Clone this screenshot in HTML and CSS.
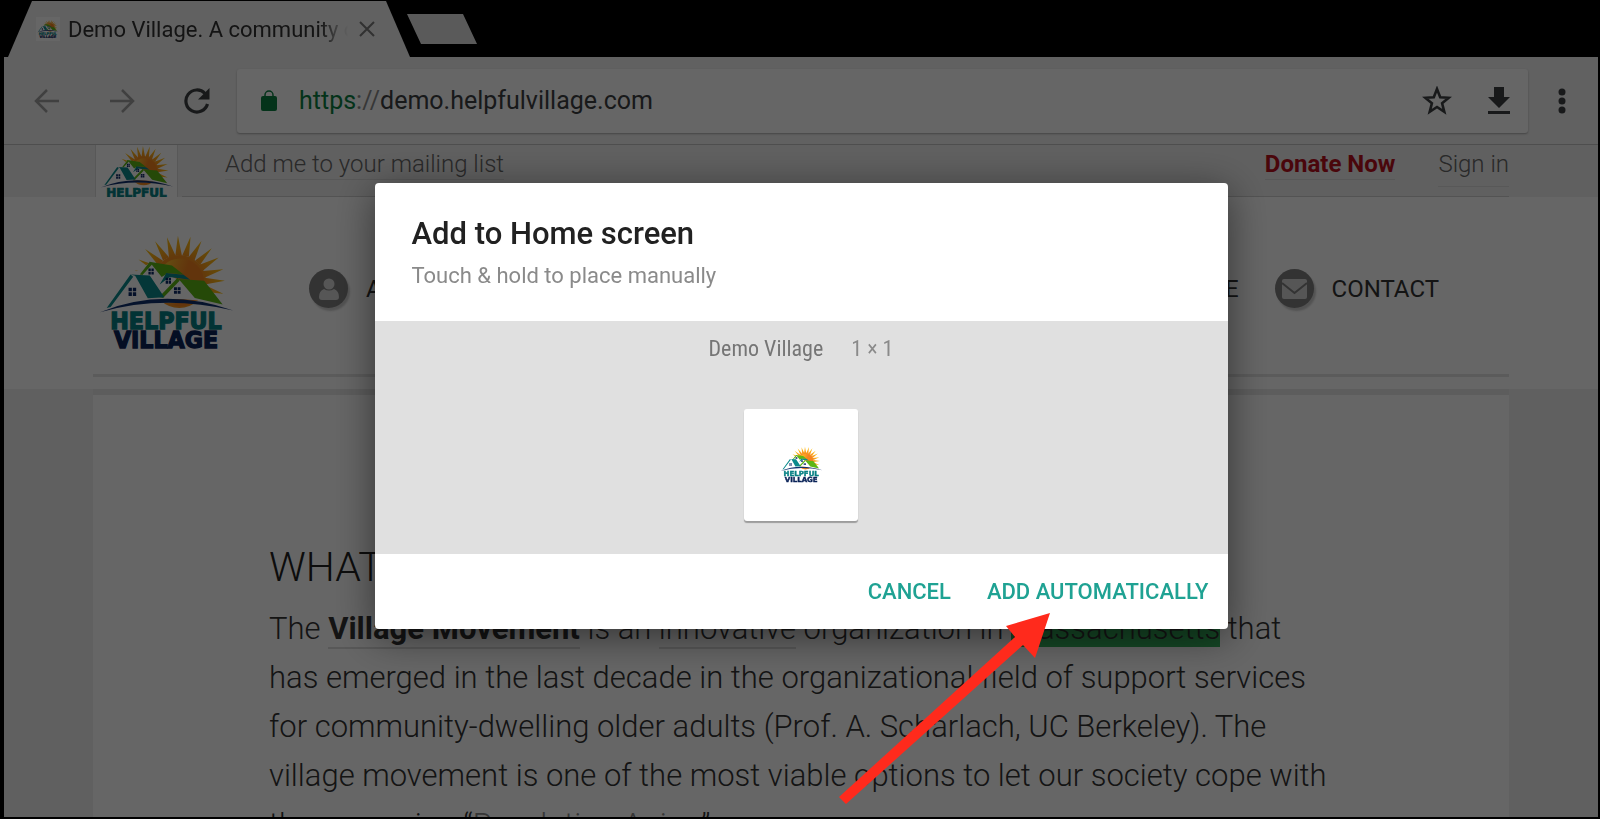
FILE: index.html
```html
<!DOCTYPE html>
<html lang="en">
<head>
    <meta charset="UTF-8">
    <meta name="viewport" content="width=device-width, initial-scale=1.0">
    <title>Demo Village. A community of neighbors</title>
    <link rel="stylesheet" href="styles.css">
</head>
<body>

<!-- Shared logo -->
<svg class="sprite" aria-hidden="true">
    <defs>
        <radialGradient id="sunFill" gradientUnits="userSpaceOnUse" cx="297" cy="423" r="138">
            <stop offset="0" stop-color="#f58220"/>
            <stop offset="0.55" stop-color="#f7901e"/>
            <stop offset="0.75" stop-color="#fbab18"/>
            <stop offset="1" stop-color="#ffc20e"/>
        </radialGradient>
        <linearGradient id="sunCore" x1="0" y1="0.2" x2="1" y2="0.5">
            <stop offset="0.1" stop-color="#ffc62e"/>
            <stop offset="0.6" stop-color="#f5821f"/>
        </linearGradient>
    </defs>
    <symbol id="logo" viewBox="55 280 410 350">
        <path fill="url(#sunFill)" d="M435 421L374 412V432zM430 460L369 454 374 434zM430 386L373 412 368 392zM416 351L368 391 358 373zM395 323L359 374 345 360zM364 301L343 360 325 350zM331 288L326 349 306 345zM293 285L305 346H285zM260 290L286 346 266 352zM224 302L266 350 248 360zM194 325L248 361 234 375zM174 357L234 377 224 395zM162 390L226 395 222 413z"/>
        <circle cx="297" cy="423" r="80" fill="url(#sunFill)"/>
        <circle cx="300" cy="426" r="72" fill="url(#sunCore)"/>
        <path fill="#fff" d="M80 500L150 404 210 366 260 402 300 420 426 492Q250 456 80 500z"/>
        <path fill="#fff" d="M80 500Q250 464 426 492L430 500Q250 470 70 508z"/>
        <path fill="#5cb615" d="M207 364l68 11 35 27-46-4-20 12zM295 416l77 5 56 72-84-20zM178 402l30-38 10 4-32 36zM236 470l56-58 6 9-50 52z"/>
        <path fill="#0b8a8c" d="M150 402l58 3 44 66-50 3-38-68zM258 398l52 5 20 15-62-8-30 22zM78 503l72-101 8 7-68 91z"/>
        <path fill="#0c2a66" d="M144 442h10v11h-10zM157 442h10v11h-10zM144 456h10v11h-10zM157 456h10v11h-10zM204 384h7v8h-7zM213 384h7v8h-7zM204 394h7v8h-7zM213 394h7v8h-7zM256 412h7v8h-7zM265 412h7v8h-7zM256 422h7v8h-7zM265 422h7v8h-7zM281 441h9v8h-9zM292 441h9v8h-9zM281 451h9v9h-9zM292 451h9v9h-9z"/>
        <path fill="#10306f" d="M58 516Q250 438 460 511 250 462 58 516z"/>
        <text class="logo-top" x="257" y="567">HELPFUL</text>
        <text class="logo-bottom" x="257" y="624">VILLAGE</text>
    </symbol>
</svg>

<div class="browser">
    <!-- Tab Strip -->
    <div class="tab-strip">
        <div class="tab">
            <svg class="favicon"><use href="#logo"/></svg>
            <span class="tab-title">Demo Village. A community of neighbors</span>
            <button class="icon-button tab-close" type="button" aria-label="Close tab">
                <svg width="18" height="18" viewBox="0 0 18 18"><path d="M2 2l14 14M16 2L2 16" fill="none" stroke="#7a7a7a" stroke-width="2"/></svg>
            </button>
        </div>
        <button class="new-tab" type="button" aria-label="New tab"></button>
    </div>

    <!-- Toolbar -->
    <div class="toolbar">
        <div class="toolbar-nav">
            <button class="icon-button" type="button" aria-label="Back">
                <svg width="26" height="26" viewBox="0 0 26 26"><path d="M25 13H2M13 2L2 13l11 11" fill="none" stroke="#a0a0a0" stroke-width="2.500"/></svg>
            </button>
            <button class="icon-button" type="button" aria-label="Forward">
                <svg width="26" height="26" viewBox="0 0 26 26"><path d="M1 13h23M13 2l11 11-11 11" fill="none" stroke="#a0a0a0" stroke-width="2.500"/></svg>
            </button>
            <button class="icon-button" type="button" aria-label="Reload">
                <svg width="26" height="26" viewBox="0 0 26 26"><path d="M23.500 16A11 11 0 1 1 21 5.500" fill="none" stroke="#3c4043" stroke-width="3.200"/><path d="M25.500 0v11.500H14z" fill="#3c4043"/></svg>
            </button>
        </div>
        <div class="omnibox">
            <svg class="lock" width="16" height="21" viewBox="0 0 16 21"><path d="M4 8V5a4 4 0 0 1 8 0v3" fill="none" stroke="#0b8043" stroke-width="1.500"/><rect y="6" width="16" height="15" rx="2" fill="#0b8043"/></svg>
            <label class="scheme" for="url"><span class="secure">https</span>://</label>
            <input class="url" id="url" type="text" value="demo.helpfulvillage.com">
            <button class="icon-button" type="button" aria-label="Bookmark">
                <svg width="30" height="29" viewBox="0 0 30 29"><path d="M15 3l3.200 8.300 8.600.5-6.700 5.500 2.200 8.500L15 21l-7.300 4.800 2.200-8.500-6.700-5.500 8.600-.5z" fill="none" stroke="#3c4043" stroke-width="2.600"/></svg>
            </button>
            <button class="icon-button" type="button" aria-label="Download">
                <svg width="22" height="27" viewBox="0 0 22 27"><path d="M6 0h10v10h6L11 21 0 10h6zM0 24h22v3H0z" fill="#3c4043"/></svg>
            </button>
        </div>
        <button class="icon-button menu" type="button" aria-label="Menu">
            <svg width="8" height="26" viewBox="0 0 8 26"><g fill="#3c4043"><circle cx="4" cy="4" r="3.500"/><circle cx="4" cy="13" r="3.500"/><circle cx="4" cy="22" r="3.500"/></g></svg>
        </button>
    </div>

    <!-- Web Page -->
    <div class="page">
        <div class="top-bar">
            <div class="small-logo"><svg><use href="#logo"/></svg></div>
            <div class="top-links">
                <a href="#">Add me to your mailing list</a>
                <a class="donate" href="#">Donate Now</a>
                <a class="sign-in" href="#">Sign in</a>
            </div>
        </div>

        <header class="site-header">
            <div class="header-inner">
                <svg class="main-logo"><use href="#logo"/></svg>
                <nav class="site-nav">
                    <a href="#">
                        <span class="nav-icon"><svg width="20" height="22" viewBox="0 0 20 22"><circle cx="10" cy="6" r="5.500"/><path d="M5 11q5 3 10 0 5 2 5 8 0 3-3 3H3q-3 0-3-3 0-6 5-8z"/></svg></span>
                        ABOUT
                    </a>
                    <a class="nav-donate" href="#">DONATE</a>
                    <a href="#">
                        <span class="nav-icon"><svg width="25" height="20" viewBox="0 0 25 20"><rect width="25" height="20" rx="2"/><path d="M0 4l12.500 10L25 4" fill="none" stroke="#7f7f7f" stroke-width="2"/></svg></span>
                        CONTACT
                    </a>
                </nav>
            </div>
        </header>

        <main class="content">
            <h1>WHAT IS A VILLAGE</h1>
            <p>The <a href="#"><b>Village Movement</b></a> is an <a href="#">innovative</a> organization in <mark>Massachusetts</mark> that has emerged in the last decade in the organizational field of support services for community-dwelling older adults (Prof. A. Scharlach, UC Berkeley). The village movement is one of the most viable options to let our society cope with the upcoming “<span class="quote">Revolution Aging</span>”.</p>
        </main>
    </div>
</div>

<!-- Dialog -->
<div class="overlay">
    <div class="dialog" role="dialog" aria-labelledby="dialogTitle">
        <div class="dialog-header">
            <h2 id="dialogTitle">Add to Home screen</h2>
            <p>Touch &amp; hold to place manually</p>
        </div>
        <div class="dialog-preview">
            <div class="preview-label"><span class="preview-name">Demo Village</span><span>1 × 1</span></div>
            <div class="app-icon"><svg><use href="#logo"/></svg></div>
        </div>
        <div class="dialog-actions">
            <button type="button">CANCEL</button>
            <button type="button">ADD AUTOMATICALLY</button>
        </div>
        <svg class="pointer" width="212" height="192" viewBox="0 0 212 192" aria-hidden="true"><path d="M211 0l-15 45-12-13L7 191l-7-7L176 24l-9-11z" fill="#ff2a1c"/></svg>
    </div>
</div>

</body>
</html>
```
FILE: styles.css
```css
/* Basic Reset */
* {
    box-sizing: border-box;
    margin: 0;
    padding: 0;
}

body {
    height: 100vh;
    overflow: hidden;
    background-color: #000;
    color: #333;
    font-family: Roboto, "Liberation Sans", sans-serif;
}

a {
    color: inherit;
    text-decoration: none;
}

button {
    border: none;
    background: none;
    font-family: inherit;
    cursor: pointer;
}

.sprite {
    position: absolute;
    width: 0;
    height: 0;
}

.logo-top,
.logo-bottom {
    font: bold 67px "DejaVu Sans", sans-serif;
    text-anchor: middle;
    fill: #078184;
    stroke: #078184;
    stroke-width: 4;
}

.logo-bottom {
    fill: #0a2358;
    stroke: #0a2358;
}

/* Browser Window */
.browser {
    display: flex;
    flex-direction: column;
    height: 100vh;
    padding: 1px 2px 2px 4px;
}

.tab-strip {
    display: flex;
    height: 56px;
    flex-shrink: 0;
}

.tab {
    display: flex;
    align-items: center;
    width: 402px;
    margin-left: 4px;
    padding: 0 34px 0 28px;
    background-color: #f2f2f2;
    clip-path: polygon(24px 0, 378px 0, 100% 100%, 0 100%);
}

.favicon {
    width: 24px;
    height: 24px;
    padding: 1px;
    background-color: #fff;
    flex-shrink: 0;
}

.tab-title {
    flex: 1;
    margin: 0 10px 0 8px;
    overflow: hidden;
    font-size: 22px;
    white-space: nowrap;
    mask-image: linear-gradient(to right, #000 90%, transparent);
}

.icon-button {
    display: flex;
    flex-shrink: 0;
}

.new-tab {
    width: 70px;
    height: 30px;
    margin: 13px 0 0 -3px;
    background-color: #e2e2e2;
    clip-path: polygon(0 0, 56px 0, 100% 100%, 14px 100%);
}

/* Toolbar */
.toolbar {
    display: flex;
    align-items: center;
    height: 88px;
    flex-shrink: 0;
    padding: 0 32px 0 30px;
    background-color: #f2f2f2;
    border-bottom: 1px solid #c4c4c4;
}

.toolbar-nav {
    display: flex;
    gap: 49px;
    margin-right: 27px;
}

.omnibox {
    display: flex;
    align-items: center;
    flex: 1;
    height: 64px;
    padding: 0 18px 0 24px;
    background-color: #fff;
    border-radius: 3px;
    box-shadow: 0 1px 2px rgba(0, 0, 0, 0.3);
}

.scheme,
.url {
    font-size: 25px;
    color: #3c4043;
}

.scheme {
    margin-left: 22px;
    color: #8a8a8a;
}

.secure {
    color: #0b8043;
}

.url {
    flex: 1;
    border: none;
    outline: none;
    background: none;
    font-family: inherit;
}

.omnibox .icon-button {
    margin-left: 36px;
}

.menu {
    margin-left: 30px;
}

/* Web Page */
.page {
    flex: 1;
    min-height: 0;
    overflow: hidden;
    background-color: #efefef;
}

.top-bar {
    display: flex;
    height: 52px;
    padding: 0 89px 0 91px;
}

.small-logo {
    width: 83px;
    margin-right: 4px;
    padding: 0 4px;
    overflow: hidden;
    background-color: #fff;
    border: 1px solid #ddd;
    border-width: 0 1px;
}

.small-logo svg {
    width: 74px;
    height: 63px;
}

.top-links {
    display: flex;
    flex: 1;
    align-items: flex-start;
    padding-left: 43px;
    border-bottom: 1px solid #cfcfcf;
    color: #666;
    font-size: 24px;
    font-weight: 300;
}

.top-links a {
    height: 35px;
    line-height: 39px;
    border-bottom: 1px solid #dcdcdc;
}

.top-links .donate {
    margin: 0 43px 0 auto;
    color: #b80f1d;
    font-weight: 700;
}

.top-links .sign-in {
    height: 42px;
}

.site-header {
    padding: 0 89px;
    background-color: #fff;
}

.header-inner {
    display: flex;
    align-items: center;
    height: 180px;
    padding: 6px 70px 0 6px;
    border-bottom: 3px solid #e4e4e4;
}

.main-logo {
    width: 136px;
    height: 116px;
    margin-top: 6px;
}

.site-nav {
    display: flex;
    flex: 1;
    align-items: center;
    margin-left: 74px;
    font-size: 24px;
}

.site-nav a {
    display: flex;
    align-items: center;
    gap: 18px;
}

.nav-donate {
    margin: 0 36px 0 auto;
}

.nav-icon {
    display: flex;
    align-items: center;
    justify-content: center;
    width: 39px;
    height: 39px;
    border-radius: 50%;
    background-color: #7f7f7f;
    box-shadow: 2px 3px 2px rgba(0, 0, 0, 0.2);
    fill: #d8d8d8;
}

.site-header::after {
    content: "";
    display: block;
    height: 12px;
}

.content {
    min-height: 440px;
    margin: 0 89px;
    padding: 144px 176px 0;
    background-color: #fff;
    border-top: 6px solid #e8e8e8;
}

.content h1 {
    font-size: 41px;
    font-weight: 300;
    line-height: 56px;
    color: #222;
}

.content p {
    margin-top: 9px;
    font-size: 31px;
    font-weight: 300;
    line-height: 49px;
}

.content p a {
    border-bottom: 2px solid #dcdcdc;
}

.content b {
    font-weight: 700;
}

mark {
    background-color: #36b35e;
    color: inherit;
}

.quote {
    color: #888;
}

/* Dialog */
.overlay {
    position: fixed;
    inset: 0;
    display: flex;
    align-items: center;
    justify-content: center;
    padding: 0 0 8px 2px;
    background-color: rgba(0, 0, 0, 0.6);
}

.dialog {
    position: relative;
    width: 90%;
    max-width: 853px;
    background-color: #fff;
    border-radius: 4px;
    box-shadow: 0 8px 40px rgba(0, 0, 0, 0.5);
}

.dialog-header {
    padding: 31px 37px 25px;
}

.dialog-header h2 {
    font-size: 31px;
    font-weight: 500;
    line-height: 40px;
    color: #212121;
}

.dialog-header p {
    margin-top: 2px;
    font-size: 22px;
    line-height: 40px;
    color: #8a8a8a;
}

.dialog-preview {
    display: flex;
    flex-direction: column;
    align-items: center;
    padding: 12px 0 33px;
    background-color: #e0e0e0;
}

.preview-label {
    display: flex;
    gap: 28px;
    margin-bottom: 44px;
    font-family: "Roboto Condensed", Roboto, sans-serif;
    font-size: 22px;
    line-height: 32px;
    color: #8a8a8a;
}

.preview-name {
    color: #757575;
}

.app-icon {
    display: flex;
    align-items: center;
    justify-content: center;
    width: 114px;
    height: 112px;
    background-color: #fff;
    border-radius: 3px;
    box-shadow: 0 2px 1px rgba(0, 0, 0, 0.3);
}

.app-icon svg {
    width: 43px;
    height: 37px;
}

.dialog-actions {
    display: flex;
    justify-content: flex-end;
    gap: 36px;
    padding: 18px 19px 17px;
}

.dialog-actions button {
    font-size: 22px;
    font-weight: 500;
    line-height: 40px;
    color: #1fa293;
}

/* Arrow over the confirm button */
.pointer {
    position: absolute;
    right: 177px;
    bottom: -176px;
}
```
